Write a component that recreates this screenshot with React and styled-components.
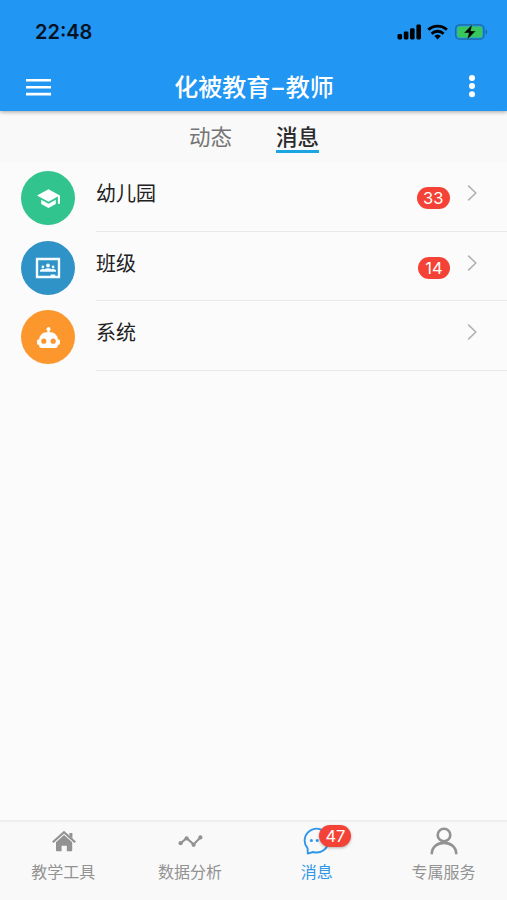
import React from "react";
import styled, { createGlobalStyle } from "styled-components";

const rows = [
  { label: "幼儿园", color: "#32c48f", Icon: SchoolIcon, count: 33 },
  { label: "班级", color: "#2f93c8", Icon: ClassIcon, count: 14 },
  { label: "系统", color: "#fb972d", Icon: RobotIcon },
];

const navItems = [
  { label: "教学工具", Icon: HomeIcon },
  { label: "数据分析", Icon: TrendIcon },
  { label: "消息", Icon: ChatIcon, count: 47, active: true },
  { label: "专属服务", Icon: UserIcon },
];

function App() {
  return (
    <Screen>
      <GlobalStyle />
      <Header>
        <StatusBar>
          <Time>22:48</Time>
          <StatusIcons />
        </StatusBar>
        <Toolbar>
          <MenuIcon />
          <Title>
            化被教育<Dash>–</Dash>教师
          </Title>
          <MoreIcon />
        </Toolbar>
      </Header>
      <Tabs>
        <Tab>动态</Tab>
        <Tab $active>消息</Tab>
      </Tabs>
      <List>
        {rows.map(({ label, color, Icon, count }) => (
          <Row key={label}>
            <Avatar $color={color}>
              <Icon />
            </Avatar>
            <RowBody>
              <RowLabel>{label}</RowLabel>
              {count && <Badge>{count}</Badge>}
              <ChevronIcon />
            </RowBody>
          </Row>
        ))}
      </List>
      <BottomNav>
        {navItems.map(({ label, Icon, count, active }) => (
          <NavItem key={label} $active={active}>
            <NavIcon>
              <Icon />
              {count && <NavBadge>{count}</NavBadge>}
            </NavIcon>
            <NavLabel>{label}</NavLabel>
          </NavItem>
        ))}
      </BottomNav>
    </Screen>
  );
}

export default App;

function StatusIcons() {
  return (
    <svg width="92" height="20" viewBox="0 0 92 20">
      <g fill="#000">
        <rect x="0.5" y="12" width="4.6" height="5.4" rx="1.4" />
        <rect x="6.8" y="9.4" width="4.6" height="8" rx="1.4" />
        <rect x="13" y="6.2" width="4.6" height="11.2" rx="1.4" />
        <rect x="19.4" y="2.6" width="4.6" height="14.8" rx="1.4" />
        <path d="M40.6 17.4l-3.3-3.4a4.8 4.8 0 0 1 6.6 0z" />
      </g>
      <g fill="none" stroke="#000" strokeWidth="2.8">
        <path d="M31.3 7.8a13.4 13.4 0 0 1 18.6 0" />
        <path d="M34.6 11.7a8.6 8.6 0 0 1 12 0" />
      </g>
      <rect x="58.7" y="2.8" width="28.2" height="14.4" rx="4" fill="none" stroke="#1d679f" strokeWidth="1.3" />
      <rect x="60.3" y="4.4" width="25" height="11.2" rx="2.4" fill="#38c75c" />
      <path d="M88.6 7.6c2 .8 2 4 0 4.8z" fill="#1d679f" />
      <path d="M75.3 2.3l-8.4 8.6h4.9l-1.7 6.8 8.6-8.8h-5z" fill="#000" stroke="#38c75c" strokeWidth=".4" />
    </svg>
  );
}

function MenuIcon() {
  return (
    <svg width="25" height="18" viewBox="0 0 25 18" fill="#fff">
      <path d="M0 1h25v2.6H0zM0 8h25v2.6H0zM0 14.8h25v2.6H0z" />
    </svg>
  );
}

function MoreIcon() {
  return (
    <svg width="8" height="24" viewBox="0 0 8 24" fill="#fff">
      <circle cx="4" cy="3" r="3" />
      <circle cx="4" cy="11.1" r="3" />
      <circle cx="4" cy="19.3" r="3" />
    </svg>
  );
}

function SchoolIcon() {
  return (
    <svg width="25" height="25" viewBox="0 0 24 24" fill="#fff">
      <path d="M5 13.18v4L12 21l7-3.82v-4L12 17l-7-3.82zM12 3L1 9l11 6 9-4.91V17h2V9L12 3z" />
    </svg>
  );
}

function ClassIcon() {
  return (
    <svg width="26" height="22" viewBox="0 0 26 22" fill="#f2fbff">
      <path fillRule="evenodd" d="M1.4.8h23.2q.6 0 .6.6v19.2q0 .6-.6.6H1.4q-.6 0-.6-.6V1.4q0-.6.6-.6zM3.2 3.2v15.6h12.4v-1.4h4.6v1.4h2.6V3.2z" />
      <circle cx="13" cy="8.5" r="1.9" />
      <circle cx="7.9" cy="10" r="1.4" />
      <circle cx="18.1" cy="10" r="1.4" />
      <path d="M5 14.7v-1.3q0-1.2 2.9-1.4 1 0 1.6.3 1-1.1 3.5-1.1t3.5 1.1q.6-.3 1.6-.3 2.9.2 2.9 1.4v1.3z" />
    </svg>
  );
}

function RobotIcon() {
  return (
    <svg width="25" height="25" viewBox="0 0 24 24" fill="#fff">
      <path d="M12 2a2 2 0 0 1 2 2c0 .74-.4 1.39-1 1.73V7h1a7 7 0 0 1 7 7h1a1 1 0 0 1 1 1v3a1 1 0 0 1-1 1h-1v1a2 2 0 0 1-2 2H5a2 2 0 0 1-2-2v-1H2a1 1 0 0 1-1-1v-3a1 1 0 0 1 1-1h1a7 7 0 0 1 7-7h1V5.73A2 2 0 0 1 12 2M7.5 13a2.5 2.5 0 1 0 0 5 2.5 2.5 0 0 0 0-5m9 0a2.5 2.5 0 1 0 0 5 2.5 2.5 0 0 0 0-5" />
    </svg>
  );
}

function ChevronIcon() {
  return (
    <svg width="10" height="18" viewBox="0 0 10 18" fill="none" stroke="#b0b0b0" strokeWidth="1.5">
      <path d="M1.2 1.6L8.8 9l-7.6 7.4" />
    </svg>
  );
}

function HomeIcon() {
  return (
    <svg width="26" height="28" viewBox="0 0 26 28" fill="currentColor">
      <path d="M2.8 15.2L14 5.2l11.2 10" fill="none" stroke="currentColor" strokeWidth="2.2" />
      <path d="M19.4 6h3v5.4l-3-2.7z" />
      <path d="M14 8l8.2 7.2v8.2q0 .8-.8.8h-4.6v-5.4h-5.2v5.4H6.8q-.8 0-.8-.8v-8.2z" />
    </svg>
  );
}

function TrendIcon() {
  return (
    <svg width="26" height="28" viewBox="0 0 26 28" fill="currentColor">
      <path d="M3.6 16.2l6-5 7 6.2 6.8-7" fill="none" stroke="currentColor" strokeWidth="2.1" />
      <circle cx="3.6" cy="16.2" r="2.1" />
      <circle cx="9.6" cy="11.4" r="2.1" />
      <circle cx="16.6" cy="17.8" r="2.1" />
      <circle cx="23.4" cy="10.4" r="2.1" />
    </svg>
  );
}

function ChatIcon() {
  return (
    <svg width="28" height="28" viewBox="0 0 28 28" fill="currentColor">
      <path
        d="M4.6 21.4A11.9 11.9 0 1 1 10.2 25L4.8 26.6z"
        fill="none"
        stroke="currentColor"
        strokeWidth="1.9"
        strokeLinejoin="round"
      />
      <circle cx="8.4" cy="13.4" r="1.5" />
      <circle cx="14.2" cy="13.4" r="1.5" />
      <circle cx="20" cy="13.4" r="1.5" />
    </svg>
  );
}

function UserIcon() {
  return (
    <svg width="28" height="28" viewBox="0 0 28 28" fill="none" stroke="currentColor" strokeWidth="2.6">
      <circle cx="14" cy="8" r="6.3" />
      <path d="M1.7 27.2C1.9 20 7.3 15.9 14 15.9S26.1 20 26.3 27.2" />
    </svg>
  );
}

const GlobalStyle = createGlobalStyle`
  body {
    margin: 0;
    background-color: #fbfbfb;
  }
  * {
    box-sizing: border-box;
  }
  svg {
    display: block;
    flex-shrink: 0;
  }
`;

const Screen = styled.div`
  display: flex;
  flex-direction: column;
  width: 100%;
  height: 100vh;
  overflow: hidden;
  background-color: #fbfbfb;
  font-family: "Noto Sans CJK SC", sans-serif;
`;

const Header = styled.header`
  height: 111px;
  flex-shrink: 0;
  background-color: #2196f3;
  box-shadow: 0 1px 4px rgba(0, 0, 0, 0.35);
  z-index: 1;
`;

const StatusBar = styled.div`
  display: flex;
  align-items: center;
  justify-content: space-between;
  height: 64px;
  padding: 0 18px 0 35px;
`;

const Time = styled.span`
  font-family: Inter, sans-serif;
  font-size: 20px;
  font-weight: 600;
  line-height: 24px;
  color: #06121f;
`;

const Toolbar = styled.div`
  display: grid;
  grid-template-columns: 1fr auto 1fr;
  align-items: center;
  height: 46px;
  padding: 0 31px 0 26px;

  svg:last-child {
    justify-self: end;
  }
`;

const Title = styled.h1`
  margin: 0 0 2px 6px;
  font-size: 24px;
  font-weight: 500;
  line-height: 36px;
  color: #fff;
`;

const Dash = styled.span`
  display: inline-block;
  width: 15.5px;
  font-family: Inter, sans-serif;
  font-size: 23px;
  line-height: 1;
  text-align: center;
`;

const Tabs = styled.nav`
  display: flex;
  justify-content: center;
  gap: 44px;
  height: 51px;
  padding: 10px 0 0 1px;
  flex-shrink: 0;
  background-color: #f9f9f9;
`;

const Tab = styled.div`
  height: 32px;
  font-size: 21.5px;
  line-height: 29px;
  font-weight: ${({ $active }) => ($active ? 500 : 400)};
  color: ${({ $active }) => ($active ? "#2b2b2b" : "#757575")};
  border-bottom: 3px solid ${({ $active }) => ($active ? "#1ba6e1" : "transparent")};
`;

const List = styled.main`
  flex: 1;
`;

const Row = styled.div`
  display: flex;
  gap: 21px;
  height: 69.5px;
  padding-left: 21px;
`;

const Avatar = styled.div`
  display: flex;
  align-items: center;
  justify-content: center;
  width: 54px;
  height: 54px;
  margin-top: 9px;
  border-radius: 50%;
  background-color: ${({ $color }) => $color};
`;

const RowBody = styled.div`
  display: flex;
  flex: 1;
  align-items: center;
  padding: 0 30px 6px 0;
  border-bottom: 1px solid #e8e8e8;
`;

const RowLabel = styled.span`
  flex: 1;
  font-size: 20px;
  line-height: 30px;
  color: #212121;
`;

const Badge = styled.span`
  min-width: 32px;
  height: 22px;
  margin: 10px 17px 0 0;
  padding: 0 6.5px;
  border-radius: 11px;
  background-color: #f44336;
  font-family: Inter, sans-serif;
  font-size: 16.5px;
  line-height: 22px;
  text-align: center;
  color: #fff;
`;

const BottomNav = styled.footer`
  display: flex;
  height: 80px;
  flex-shrink: 0;
  border-top: 2px solid #eee;
  background-color: #f9f9f9;
`;

const NavItem = styled.div`
  display: flex;
  flex: 1;
  flex-direction: column;
  align-items: center;
  padding-top: 5px;
  color: ${({ $active }) => ($active ? "#2f96e8" : "#929292")};
`;

const NavIcon = styled.div`
  position: relative;
  height: 28px;
`;

const NavBadge = styled(Badge)`
  position: absolute;
  top: -2px;
  left: 16.5px;
  margin: 0;
  padding: 0 6px;
  box-shadow: 0 1px 3px rgba(0, 0, 0, 0.3);
`;

const NavLabel = styled.span`
  margin-top: 4px;
  font-size: 16px;
  line-height: 24px;
`;
